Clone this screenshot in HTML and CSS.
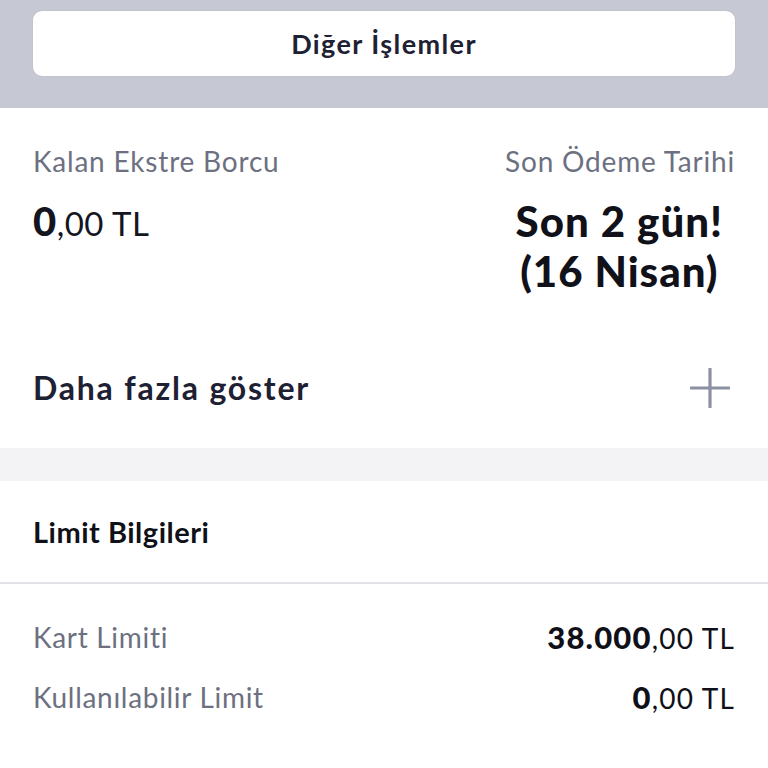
FILE: index.html
```html
<!DOCTYPE html>
<html lang="tr">
<head>
<meta charset="utf-8">
<link rel="stylesheet" href="styles.css">
</head>
<body>
<div class="top">
  <div class="btn">Diğer İşlemler</div>
</div>
<section class="summary">
  <div class="cols">
    <div class="col">
      <div class="label">Kalan Ekstre Borcu</div>
      <div class="amount"><b>0</b>,00 TL</div>
    </div>
    <div class="col right">
      <div class="label">Son Ödeme Tarihi</div>
      <div class="due">Son 2 gün!<br>(16 Nisan)</div>
    </div>
  </div>
  <div class="more">
    <span>Daha fazla göster</span>
    <svg class="plus" width="40" height="40" viewBox="0 0 40 40"><path d="M20 1V39M1 20H39" stroke="#8b90a4" stroke-width="3.2" stroke-linecap="round" fill="none"/></svg>
  </div>
</section>
<div class="gap"></div>
<section class="limits">
  <div class="head">Limit Bilgileri</div>
  <div class="rows">
    <div class="row"><span class="k">Kart Limiti</span><span class="v"><b>38.000</b>,00 TL</span></div>
    <div class="row"><span class="k">Kullanılabilir Limit</span><span class="v"><b>0</b>,00 TL</span></div>
  </div>
</section>
</body>
</html>
```
FILE: styles.css
```css
html, body { margin: 0; padding: 0; background: #fff; }
body { font-family: "Lato", "Noto Sans", sans-serif; color: #1b1d2b; width: 768px; height: 768px; overflow: hidden; }
.top { background: #c6c9d3; height: 108px; padding: 11px 33px 0; box-sizing: border-box; }
.btn { background: #fff; height: 65px; border-radius: 9px; display: flex; align-items: center; justify-content: center; font-size: 27px; font-weight: 700; letter-spacing: 1.4px; color: #1e2033; box-shadow: 0 0 2px rgba(0,0,0,0.08); }
.summary { padding: 0 33px; height: 340px; box-sizing: border-box; }
.cols { display: flex; justify-content: space-between; padding-top: 35px; }
.col { display: flex; flex-direction: column; }
.col.right { align-items: flex-end; }
.label { font-size: 28px; color: #6c7080; line-height: 36px; letter-spacing: 0.8px; }
.amount { font-size: 33px; margin-top: 20px; line-height: 44px; color: #14151f; letter-spacing: 0.5px; }
.amount b { font-size: 40px; font-weight: 900; }
.due { font-size: 42px; font-weight: 900; line-height: 50px; letter-spacing: 1px; text-align: center; margin-top: 17px; margin-right: 12px; color: #101119; }
.more { display: flex; justify-content: space-between; align-items: center; margin-top: 72px; font-size: 32px; line-height: 40px; font-weight: 700; letter-spacing: 1.8px; color: #1e2033; }
.plus { margin-right: 5px; }
.gap { height: 33px; background: #f3f3f6; }
.head { height: 103px; border-bottom: 2px solid #e2e2e6; box-sizing: border-box; padding-left: 33px; display: flex; align-items: center; font-size: 29px; font-weight: 700; letter-spacing: 0.5px; color: #0f1018; }
.rows { padding: 23px 33px 0; }
.row { display: flex; justify-content: space-between; align-items: center; height: 60px; }
.k { font-size: 28px; color: #6c7080; letter-spacing: 0.7px; }
.v { font-size: 28px; color: #0f1018; letter-spacing: 1.2px; }
.v b { font-size: 31px; font-weight: 900; }
```
